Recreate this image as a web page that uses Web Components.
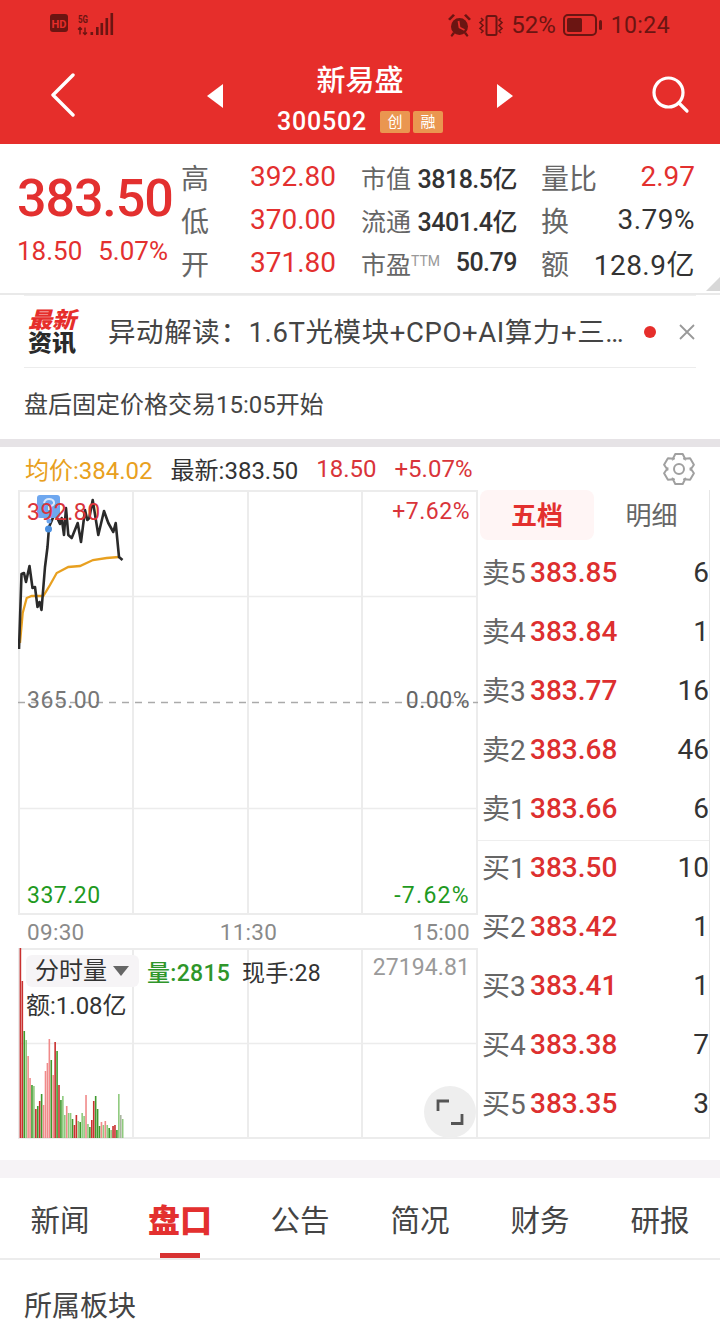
<!DOCTYPE html>
<html lang="zh">
<head>
<meta charset="utf-8">
<title>新易盛</title>
<style>
    html, body { margin: 0; padding: 0; height: 1327px; overflow: hidden; background: #fff; }
    body { font-family: Roboto, "Noto Sans CJK SC", sans-serif; color: #333; }
</style>
</head>
<body>
<stock-header></stock-header>
<quote-panel></quote-panel>
<news-panel></news-panel>
<chart-toolbar></chart-toolbar>
<market-panel></market-panel>
<tab-bar></tab-bar>
<section-title>所属板块</section-title>

<script>
const FONT = `Roboto, "Noto Sans CJK SC", sans-serif`;

class StockHeader extends HTMLElement {
    constructor() {
        super();
        this.attachShadow({ mode: "open" }).innerHTML = `
            <style>
                :host { display: block; height: 144px; background: #e62e2b; color: #fff; font-family: ${FONT}; }
                .status { height: 50px; display: flex; align-items: center; justify-content: space-between; padding: 0 50px; color: #6b1512; }
                .status svg { display: block; }
                .right { display: flex; align-items: center; gap: 7px; }
                .pct { font-size: 24px; }
                .time { font-size: 23px; margin-left: 2px; letter-spacing: .4px; }
                .nav { height: 94px; box-sizing: border-box; padding: 0 30px 3px 30px; display: grid; grid-template-columns: 1fr auto 1fr; align-items: center; }
                .search { justify-self: end; margin-top: -2px; }
                .back { margin: -1px 0 0 20px; }
                .center { display: flex; align-items: center; gap: 54px; }
                .name { text-align: center; align-self: flex-start; }
                h1 { margin: 11px 0 0; font-size: 29px; font-weight: 500; line-height: 36px; }
                .code { display: flex; align-items: center; gap: 3px; height: 36px; margin-top: 5px; font-size: 25px; font-weight: 500; letter-spacing: .8px; }
                .code b { display: block; width: 30px; height: 22px; background: #ea9650; border-radius: 2px; font-size: 15px; line-height: 22px; font-weight: 400; letter-spacing: 0; text-align: center; }
                .code b:first-of-type { margin-left: 10px; }
            </style>
            <div class="status">
                <svg width="64" height="26" viewBox="0 0 64 26">
                    <rect x="0" y="2" width="18" height="18" rx="3" fill="#6b1512"/>
                    <text x="9" y="15.500" font-size="11" font-weight="700" text-anchor="middle" fill="#e62e2b" font-family="Roboto">HD</text>
                    <text x="28" y="11" font-size="11" font-weight="700" fill="#6b1512" font-family="Roboto" textLength="10" lengthAdjust="spacingAndGlyphs">5G</text>
                    <path d="M30 15.500v7M28 17.500l2-2 2 2M35 15.500v7M33 20.500l2 2 2-2" stroke="#6b1512" stroke-width="1.400" fill="none"/>
                    <g fill="#6b1512"><rect x="40.500" y="20" width="2.600" height="3"/><rect x="46" y="15" width="2.600" height="8"/><rect x="50.500" y="11" width="2.600" height="12"/><rect x="55.500" y="6" width="2.600" height="17"/><rect x="60.500" y="1" width="2.600" height="22"/></g>
                </svg>
                <div class="right">
                    <svg width="23" height="23" viewBox="0 0 23 23" fill="#6b1512">
                        <circle cx="11.500" cy="12.500" r="8.500"/>
                        <path d="M0 5l5-5 2 1.500-5 5zM23 5l-5-5-2 1.500 5 5zM5 18l-2.500 3.500 1.500 1.500 3-3.500zM18 18l2.500 3.500-1.500 1.500-3-3.500z"/>
                        <path d="M10.500 7l1 6.500 5 2.500" fill="none" stroke="#e62e2b" stroke-width="1.800"/>
                    </svg>
                    <svg width="26" height="21" viewBox="0 0 26 21" fill="none" stroke="#6b1512" stroke-width="2">
                        <rect x="8.500" y="1" width="10" height="19" rx="1.500"/>
                        <path d="M3 3l2 2-3 2.500 3 3-3 3 3 2.500-2 2M23 3l-2 2 3 2.500-3 3 3 3-3 2.500 2 2" stroke-width="1.600"/>
                    </svg>
                    <span class="pct">52%</span>
                    <svg width="39" height="22" viewBox="0 0 39 22">
                        <rect x="1" y="1" width="32" height="20" rx="4" fill="none" stroke="#6b1512" stroke-width="2"/>
                        <rect x="4" y="4" width="15" height="14" rx="1.500" fill="#6b1512"/>
                        <rect x="36" y="6" width="3" height="10" rx="1.500" fill="#6b1512"/>
                    </svg>
                    <span class="time">10:24</span>
                </div>
            </div>
            <div class="nav">
                <svg class="back" width="26" height="44" viewBox="0 0 26 44" fill="none" stroke="#fff" stroke-width="3.400" stroke-linecap="round" stroke-linejoin="round"><path d="M23 2L3 22l20 20"/></svg>
                <div class="center">
                    <svg width="16" height="24" viewBox="0 0 16 24"><path d="M16 0v24L0 12z" fill="#fff"/></svg>
                    <div class="name">
                        <h1>新易盛</h1>
                        <div class="code">300502<b>创</b><b>融</b></div>
                    </div>
                    <svg width="16" height="24" viewBox="0 0 16 24"><path d="M0 0v24l16-12z" fill="#fff"/></svg>
                </div>
                <svg class="search" width="38" height="38" viewBox="0 0 38 38" fill="none" stroke="#fff" stroke-width="3.200" stroke-linecap="round"><circle cx="16.500" cy="16.500" r="14.500"/><path d="M27 27l8 8"/></svg>
            </div>`;
    }
}
customElements.define("stock-header", StockHeader);

class QuotePanel extends HTMLElement {
    constructor() {
        super();
        this.attachShadow({ mode: "open" }).innerHTML = `
            <style>
                :host { display: flex; position: relative; height: 151px; box-sizing: border-box; border-bottom: 2px solid #e9e9e9; font-family: ${FONT}; padding: 11px 0 0 17px; }
                .main { width: 164px; flex: none; color: #e3302f; }
                .price { font-size: 52px; font-weight: 500; line-height: 60px; margin-top: 14px; letter-spacing: -1.100px; white-space: nowrap; }
                .sub { display: flex; justify-content: space-between; width: 151px; font-size: 26px; line-height: 32px; margin-top: 6px; }
                .grid { display: grid; grid-template-columns: 155px 180px 179px; grid-auto-rows: 43px; align-items: center; white-space: nowrap; }
                .cell { display: flex; justify-content: space-between; align-items: center; }
                .l { color: #666; font-size: 28px; }
                .s { color: #666; font-size: 25px; }
                .v { color: #333; font-size: 25px; font-weight: 500; letter-spacing: -.500px; }
                .c2 { width: 156px; margin-left: 25px; }
                .c3 { width: 154px; margin-left: 25px; }
                .r { color: #e3302f; font-size: 28px; }
                .d { font-size: 28px; color: #333; letter-spacing: .500px; }
                sup { font-size: 14px; vertical-align: 8px; line-height: 0; color: #999; }
                .corner { position: absolute; right: 0; bottom: 2px; width: 0; height: 0; border-left: 14px solid transparent; border-bottom: 14px solid #d8d8d8; }
            </style>
            <div class="main">
                <div class="price">383.50</div>
                <div class="sub"><span>18.50</span><span>5.07%</span></div>
            </div>
            <div class="grid">
                <div class="cell"><span class="l">高</span><span class="r">392.80</span></div>
                <div class="cell c2"><span class="s">市值</span><span class="v">3818.5亿</span></div>
                <div class="cell c3"><span class="l">量比</span><span class="r">2.97</span></div>
                <div class="cell"><span class="l">低</span><span class="r">370.00</span></div>
                <div class="cell c2"><span class="s">流通</span><span class="v">3401.4亿</span></div>
                <div class="cell c3"><span class="l">换</span><span class="d">3.79%</span></div>
                <div class="cell"><span class="l">开</span><span class="r">371.80</span></div>
                <div class="cell c2"><span class="s">市盈<sup>TTM</sup></span><span class="v">50.79</span></div>
                <div class="cell c3"><span class="l">额</span><span class="d">128.9亿</span></div>
            </div>
            <div class="corner"></div>`;
    }
}
customElements.define("quote-panel", QuotePanel);

class NewsPanel extends HTMLElement {
    constructor() {
        super();
        this.attachShadow({ mode: "open" }).innerHTML = `
            <style>
                :host { display: block; height: 152px; box-sizing: border-box; padding: 0 24px; border-bottom: 8px solid #e6e3e6; font-family: ${FONT}; }
                .top { height: 73px; box-sizing: border-box; display: flex; align-items: center; border-top: 1px solid #efefef; border-bottom: 1px solid #ececec; }
                .logo { width: 84px; flex: none; font-size: 16px; line-height: 23px; font-weight: 900; color: #2a2a2a; padding: 0 0 0 4px; box-sizing: border-box; }
                .logo span { display: block; height: 23px; transform-origin: left center; transform: scale(1.500, 1.400); }
                .logo .hot { color: #e62e2b; font-style: italic; }
                .text { width: 518px; flex: none; margin-top: -3px; font-size: 27.500px; letter-spacing: .600px; color: #444; white-space: nowrap; overflow: hidden; }
                .dot { width: 12px; height: 12px; border-radius: 50%; background: #e62e2b; margin-left: 18px; flex: none; }
                svg { margin-left: 23px; flex: none; }
                .notice { font-size: 24px; color: #444; line-height: 74px; }
            </style>
            <div class="top">
                <div class="logo"><span class="hot">最新</span><span>资讯</span></div>
                <div class="text">异动解读：1.6T光模块+CPO+AI算力+三…</div>
                <div class="dot"></div>
                <svg width="16" height="16" viewBox="0 0 16 16" stroke="#999" stroke-width="1.800"><path d="M1 1l14 14M15 1L1 15"/></svg>
            </div>
            <div class="notice">盘后固定价格交易15:05开始</div>`;
    }
}
customElements.define("news-panel", NewsPanel);

// six tooth outline around the svg centre
function gearPath(cx, cy, outer, inner) {
    const pts = [];
    for (let i = 0; i < 6; i++) {
        const a = -90 + i * 60;
        [[-34, inner], [-14, outer], [14, outer], [34, inner]].forEach(([d, r]) => {
            const t = (a + d) * Math.PI / 180;
            pts.push(`${(cx + r * Math.cos(t)).toFixed(1)} ${(cy + r * Math.sin(t)).toFixed(1)}`);
        });
    }
    return "M" + pts.join("L") + "z";
}

class ChartToolbar extends HTMLElement {
    constructor() {
        super();
        this.attachShadow({ mode: "open" }).innerHTML = `
            <style>
                :host { display: flex; align-items: center; height: 43px; padding: 0 25px 0 25px; box-sizing: border-box; font-family: ${FONT}; font-size: 24px; white-space: nowrap; color: #333; gap: 18px; }
                .avg { color: #e8a020; }
                .up { color: #d9343a; }
                svg { margin-left: auto; margin-top: 1px; }
            </style>
            <span class="avg">均价:384.02</span>
            <span>最新:383.50</span>
            <span class="up">18.50</span>
            <span class="up">+5.07%</span>
            <svg width="32" height="34" viewBox="0 0 32 34" fill="none" stroke="#a0a0a0" stroke-width="2" stroke-linejoin="round">
                <path d="${gearPath(16, 17, 15.5, 11.5)}"/>
                <circle cx="16" cy="17" r="5"/>
            </svg>`;
    }
}
customElements.define("chart-toolbar", ChartToolbar);

const PRICE_LINE = "19,649 21.500,574 24,573 26,582 29.500,566 32.500,588 35,587 37.500,607 39.500,602 41.500,610 45,567 47.500,547 49,527 55,513 60,524 61.700,518 64,535 66,508 68.300,535 71.700,538 77.700,523 81,542 85,510 87.300,520 89.300,518 92.700,500 98.300,535 104,511 108.300,523 113.300,532 115.700,523 119,557 122.500,560";
const AVG_LINE = "20,643 22.700,613 26.700,598 31.700,596 43.300,596 50,585 56.700,573 68.300,567 80,566 93,560 106.700,558 119,557";
// bar heights read off the volume pane, r/g = solid, R/G = pale, x = grey
const VOLUME = [[190,"r"],[157,"r"],[107,"g"],[98,"G"],[82,"R"],[60,"R"],[53,"g"],[52,"G"],[29,"r"],[32,"g"],[37,"r"],[44,"g"],[33,"R"],[67,"R"],[75,"R"],[99,"R"],[78,"g"],[63,"R"],[96,"r"],[87,"g"],[53,"r"],[38,"g"],[42,"G"],[23,"G"],[32,"R"],[25,"G"],[25,"G"],[19,"g"],[13,"r"],[23,"r"],[17,"G"],[16,"g"],[25,"G"],[22,"G"],[43,"R"],[14,"G"],[11,"g"],[18,"r"],[37,"r"],[42,"g"],[29,"g"],[12,"g"],[16,"R"],[13,"G"],[17,"R"],[13,"G"],[10,"g"],[8,"G"],[12,"r"],[13,"r"],[8,"g"],[44,"G"],[23,"x"],[19,"G"]];
const BAR_COLORS = { r: "#c9302f", g: "#3f9a2e", R: "#f08a8a", G: "#8fca7e", x: "#a9b5a0" };

class TrendChart extends HTMLElement {
    constructor() {
        super();
        const bars = VOLUME.map(([h, c], i) =>
            `<rect x="${(19.6 + i * 1.93).toFixed(2)}" y="${1138 - h}" width="1.600" height="${h}" fill="${BAR_COLORS[c]}"/>`).join("");
        const grid = "#ececec";
        this.attachShadow({ mode: "open" }).innerHTML = `
            <style>
                :host { display: block; position: relative; width: 460px; flex: none; font-family: ${FONT}; font-size: 23px; }
                svg { display: block; }
                .price { position: relative; height: 425px; }
                .axis { height: 33px; display: flex; justify-content: space-between; align-items: center; padding: 0 8px 0 9px; color: #8a8a8a; font-size: 22.500px; letter-spacing: .3px; box-sizing: border-box; }
                .volume { position: relative; height: 191px; }
                .tag { position: absolute; white-space: nowrap; line-height: 26px; letter-spacing: .500px; }
                .up { color: #d9343a; } .down { color: #1f9a1f; } .flat { color: #666; }
                .sel { left: 8px; top: 7px; height: 32px; width: 113px; background: #f6f4f6; border-radius: 6px; display: flex; align-items: center; gap: 6px; padding-left: 9px; box-sizing: border-box; color: #333; font-size: 24px; letter-spacing: 0; }
                .sel::after { content: ""; border: 8px solid transparent; border-top: 10px solid #666; border-bottom: 0; }
                .zoom { position: absolute; right: 2px; bottom: 1px; width: 52px; height: 52px; border-radius: 50%; background: #eeeeee; }
            </style>
            <div class="price">
                <svg width="460" height="425" viewBox="18 490 460 425" fill="none">
                    <g stroke="${grid}" stroke-width="2">
                        <path d="M19 490v425M133 490v425M248 490v425M362 490v425M477 490v425"/>
                        <path d="M18 491h460M18 914h460" />
                    </g>
                    <path d="M18 596.500h460M18 808.500h460" stroke="${grid}" stroke-width="1.500"/>
                    <path d="M18 702.500h460" stroke="#aaa" stroke-width="1.500" stroke-dasharray="7 6"/>
                    <polyline points="${AVG_LINE}" stroke="#e8a020" stroke-width="2.300"/>
                    <polyline points="${PRICE_LINE}" stroke="#2a2a2a" stroke-width="2.600" stroke-linejoin="round"/>
                    <rect x="37" y="495" width="23" height="23" rx="3" fill="#6ea7ef"/>
                    <circle cx="49" cy="521" r="2.500" fill="#6ea7ef"/><circle cx="48.500" cy="529" r="3.500" fill="#4a8fe0"/>
                    <path d="M44 503q1-4 5-4t5 3-5 5v3" stroke="#dbe9fb" stroke-width="2"/>
                </svg>
                <span class="tag up" style="left:9px;top:10px">392.80</span>
                <span class="tag up" style="right:8px;top:9px">+7.62%</span>
                <span class="tag flat" style="left:9px;top:198px;color:#777">365.00</span>
                <span class="tag flat" style="right:8px;top:198px">0.00%</span>
                <span class="tag down" style="left:9px;top:393px">337.20</span>
                <span class="tag down" style="right:8px;top:393px;letter-spacing:1.300px">-7.62%</span>
            </div>
            <div class="axis"><span>09:30</span><span>11:30</span><span>15:00</span></div>
            <div class="volume">
                <svg width="460" height="191" viewBox="18 948 460 191" fill="none">
                    <g stroke="${grid}" stroke-width="2">
                        <path d="M19 948v191M133 948v191M248 948v191M362 948v191M477 948v191"/>
                        <path d="M18 949h460M18 1138h460"/>
                    </g>
                    <path d="M18 1043.500h460" stroke="${grid}" stroke-width="1.500"/>
                    ${bars}
                </svg>
                <div class="tag sel">分时量</div>
                <span class="tag" style="left:129px;top:13px;color:#2f962a;font-weight:500;letter-spacing:.300px">量:2815</span>
                <span class="tag" style="left:224px;top:13px;color:#333;letter-spacing:.300px">现手:28</span>
                <span class="tag" style="left:8px;top:45px;color:#333;font-size:24px;letter-spacing:0">额:1.08亿</span>
                <span class="tag" style="right:8px;top:7px;color:#9a9a9a;letter-spacing:.100px">27194.81</span>
                <div class="zoom">
                    <svg width="52" height="52" viewBox="0 0 52 52" fill="none" stroke="#555" stroke-width="2.800"><path d="M14 25v-10h11M38 28v9.500h-11"/></svg>
                </div>
            </div>`;
    }
}
customElements.define("trend-chart", TrendChart);

class OrderRow extends HTMLElement {
    constructor() {
        super();
        this.attachShadow({ mode: "open" });
    }
    connectedCallback() {
        this.shadowRoot.innerHTML = `
            <style>
                :host { display: flex; align-items: center; height: 59px; padding: 0 0 0 4px; font-family: ${FONT}; white-space: nowrap; }
                .l { color: #666; font-size: 28px; width: 48px; flex: none; margin-bottom: 3px; }
                .p { color: #dd2f2f; font-size: 28px; font-weight: 500; }
                .s { color: #333; font-size: 28px; margin-left: auto; }
            </style>
            <span class="l">${this.getAttribute("label")}</span>
            <span class="p">${this.getAttribute("price")}</span>
            <span class="s">${this.getAttribute("size")}</span>`;
    }
}
customElements.define("order-row", OrderRow);

class OrderBook extends HTMLElement {
    constructor() {
        super();
        const row = ([label, price, size]) => `<order-row label="${label}" price="${price}" size="${size}"></order-row>`;
        const sell = [["卖5","383.85","6"],["卖4","383.84","1"],["卖3","383.77","16"],["卖2","383.68","46"],["卖1","383.66","6"]];
        const buy = [["买1","383.50","10"],["买2","383.42","1"],["买3","383.41","1"],["买4","383.38","7"],["买5","383.35","3"]];
        this.attachShadow({ mode: "open" }).innerHTML = `
            <style>
                :host { display: block; width: 232px; height: 649px; box-sizing: border-box; border-right: 1px solid #e6e6e6; border-bottom: 2px solid #ececec; font-family: ${FONT}; }
                .tabs { display: flex; height: 50px; margin-bottom: 3px; }
                .tabs div { width: 115px; text-align: center; line-height: 52px; font-size: 26px; color: #666; }
                .tabs .on { width: 114px; margin-left: 2px; background: #fff5f5; border-radius: 8px; color: #e3302f; font-weight: 700; }
                .sell { height: 298px; box-sizing: border-box; border-bottom: 1px solid #eeeeee; }
                .buy { margin-top: -3px; }
            </style>
            <div class="tabs"><div class="on">五档</div><div>明细</div></div>
            <div class="sell">${sell.map(row).join("")}</div>
            <div class="buy">${buy.map(row).join("")}</div>`;
    }
}
customElements.define("order-book", OrderBook);

class MarketPanel extends HTMLElement {
    constructor() {
        super();
        this.attachShadow({ mode: "open" }).innerHTML = `
            <style>
                :host { display: flex; height: 688px; box-sizing: border-box; padding-left: 18px; border-bottom: 18px solid #f6f3f6; }
            </style>
            <trend-chart></trend-chart>
            <order-book></order-book>`;
    }
}
customElements.define("market-panel", MarketPanel);

class TabBar extends HTMLElement {
    constructor() {
        super();
        const tabs = ["新闻", "盘口", "公告", "简况", "财务", "研报"];
        this.attachShadow({ mode: "open" }).innerHTML = `
            <style>
                :host { display: grid; grid-template-columns: repeat(6, 120px); height: 82px; box-sizing: border-box; border-bottom: 2px solid #ececec; font-family: ${FONT}; }
                div { position: relative; text-align: center; line-height: 86px; font-size: 29.500px; color: #444; height: 80px; }
                .on { color: #e3302f; font-weight: 900; font-size: 32px; }
                .on::after { content: ""; position: absolute; left: 40px; bottom: 0; width: 40px; height: 5px; background: #d83232; }
            </style>
            ${tabs.map(t => `<div class="${t === "盘口" ? "on" : ""}">${t}</div>`).join("")}`;
    }
}
customElements.define("tab-bar", TabBar);

class SectionTitle extends HTMLElement {
    constructor() {
        super();
        this.attachShadow({ mode: "open" }).innerHTML = `
            <style>
                :host { display: block; padding: 27px 24px 0; font-family: ${FONT}; font-size: 28px; line-height: 40px; color: #444; }
            </style>
            <slot></slot>`;
    }
}
customElements.define("section-title", SectionTitle);
</script>
</body>
</html>
